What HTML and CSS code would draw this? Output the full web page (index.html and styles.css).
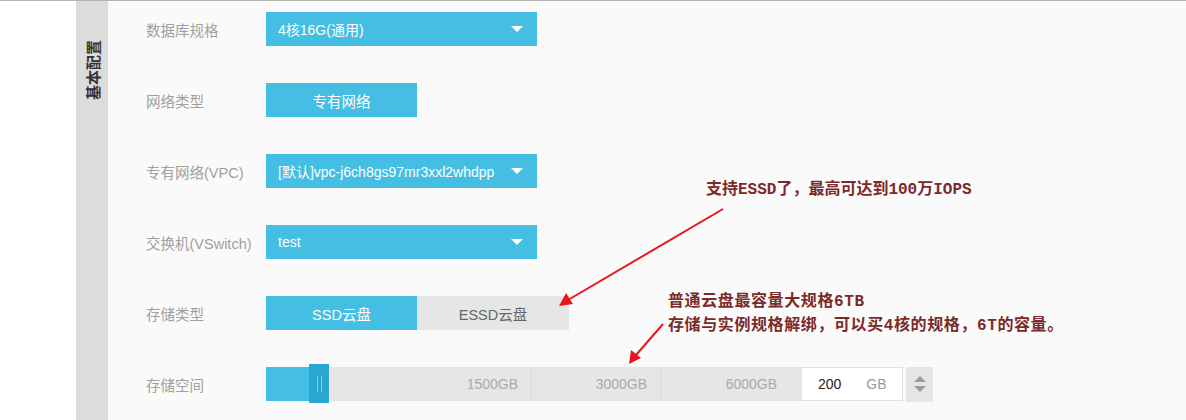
FILE: index.html
```html
<!DOCTYPE html>
<html lang="zh">
<head>
<meta charset="utf-8">
<title>基本配置</title>
<link rel="stylesheet" href="styles.css">
</head>
<body>
<div class="page">
  <div class="gutter"></div>
  <div class="side"><span class="side-title">基本配置</span></div>
  <div class="content">
    <div class="row">
      <div class="label">数据库规格</div>
      <div class="select"><span>4核16G(通用)</span><i class="caret"></i></div>
    </div>
    <div class="row">
      <div class="label">网络类型</div>
      <div class="btn active">专有网络</div>
    </div>
    <div class="row">
      <div class="label">专有网络(VPC)</div>
      <div class="select"><span>[默认]vpc-j6ch8gs97mr3xxl2whdpp</span><i class="caret"></i></div>
    </div>
    <div class="row">
      <div class="label">交换机(VSwitch)</div>
      <div class="select"><span>test</span><i class="caret"></i></div>
    </div>
    <div class="row">
      <div class="label">存储类型</div>
      <div class="seg">
        <div class="btn active">SSD云盘</div>
        <div class="btn">ESSD云盘</div>
      </div>
    </div>
    <div class="row">
      <div class="label">存储空间</div>
      <div class="slider">
        <div class="track">
          <div class="part p1">1500GB</div>
          <div class="part p2">3000GB</div>
          <div class="part p3">6000GB</div>
          <div class="fill"></div>
          <div class="handle"><i></i><i></i></div>
        </div>
        <div class="num"><span class="val">200</span><span class="unit">GB</span></div>
        <div class="spin"><i class="up"></i><i class="down"></i></div>
      </div>
    </div>
  </div>
</div>

<div class="note note1">支持ESSD了，最高可达到100万IOPS</div>
<div class="note note2">普通云盘最容量大规格6TB<br>存储与实例规格解绑，可以买4核的规格，6T的容量。</div>

<svg class="arrows" width="1186" height="420" viewBox="0 0 1186 420">
  <g stroke="#e8161b" stroke-width="2" fill="none">
    <line x1="723" y1="209" x2="568" y2="300"/>
    <line x1="663" y1="324" x2="636" y2="355"/>
  </g>
  <g fill="#e8161b">
    <polygon points="559,306 566,293 573,304"/>
    <polygon points="629,364 631,350 641,358"/>
  </g>
</svg>
</body>
</html>
```

FILE: styles.css
```css
html, body {
  margin: 0;
  padding: 0;
  height: 100%;
  background: #ffffff;
}
body {
  font-family: "Liberation Sans", "Noto Sans CJK SC", sans-serif;
  position: relative;
  overflow: hidden;
}
.page {
  display: flex;
  height: 420px;
  border-top: 1px solid #b3b3b3;
  box-sizing: border-box;
}
.gutter {
  width: 76px;
  background: #ffffff;
}
.side {
  width: 32px;
  background: #dcdcdc;
  display: flex;
  justify-content: center;
  padding-top: 37px;
  box-sizing: border-box;
}
.side-title {
  writing-mode: vertical-rl;
  text-orientation: sideways;
  transform: rotate(180deg);
  font-family: "Noto Sans CJK SC", sans-serif;
  font-weight: bold;
  font-size: 15px;
  line-height: 15px;
  color: #333333;
  height: 62px;
}
.content {
  flex: 1;
  background: #fafafa;
  padding: 11px 0 0 38px;
  display: flex;
  flex-direction: column;
  gap: 37px;
}
.row {
  display: flex;
  align-items: center;
  height: 34px;
}
.label {
  width: 120px;
  font-size: 14.5px;
  color: #a0a0a0;
}
.select {
  width: 271px;
  height: 34px;
  background: #44bee3;
  color: #ffffff;
  display: flex;
  align-items: center;
  justify-content: space-between;
  padding: 0 14px 0 12px;
  box-sizing: border-box;
  font-size: 14px;
}
.caret {
  width: 0;
  height: 0;
  border-left: 6px solid transparent;
  border-right: 6px solid transparent;
  border-top: 6px solid #ffffff;
}
.btn {
  width: 151px;
  height: 34px;
  display: flex;
  align-items: center;
  justify-content: center;
  font-size: 14.5px;
  background: #e6e6e6;
  color: #666666;
}
.btn.active {
  background: #44bee3;
  color: #ffffff;
}
.seg {
  display: flex;
}
.seg .btn + .btn {
  width: 152px;
}
.slider {
  display: flex;
  align-items: center;
}
.track {
  position: relative;
  display: flex;
  height: 34px;
  width: 535px;
  background: #e6e6e6;
}
.part {
  display: flex;
  align-items: center;
  justify-content: flex-end;
  font-size: 14px;
  color: #aaaaaa;
  box-sizing: border-box;
  height: 34px;
}
.p1 { width: 266px; padding-right: 13px; border-right: 1px solid #d9d9d9; }
.p2 { width: 129px; padding-right: 13px; border-right: 1px solid #d9d9d9; }
.p3 { width: 140px; padding-right: 24px; }
.fill {
  position: absolute;
  left: 0;
  top: 0;
  width: 44px;
  height: 34px;
  background: #44bee3;
}
.handle {
  position: absolute;
  left: 43px;
  top: -3px;
  width: 20px;
  height: 39px;
  background: #2ba6d0;
  display: flex;
  justify-content: center;
  align-items: center;
  gap: 3px;
}
.handle i {
  width: 1px;
  height: 16px;
  background: #7fd0ea;
}
.num {
  width: 102px;
  height: 34px;
  background: #ffffff;
  border: 1px solid #e3e3e3;
  box-sizing: border-box;
  display: flex;
  align-items: center;
  padding-left: 16px;
  gap: 25px;
  font-size: 14px;
}
.val { color: #222222; }
.unit { color: #999999; }
.spin {
  margin-left: 3px;
  width: 27px;
  height: 35px;
  background: #e6e6e6;
  display: flex;
  flex-direction: column;
  align-items: center;
  justify-content: center;
  gap: 4px;
}
.spin .up {
  width: 0; height: 0;
  border-left: 6px solid transparent;
  border-right: 6px solid transparent;
  border-bottom: 6px solid #9a9a9a;
}
.spin .down {
  width: 0; height: 0;
  border-left: 6px solid transparent;
  border-right: 6px solid transparent;
  border-top: 6px solid #9a9a9a;
}
.note {
  position: absolute;
  font-family: "Liberation Mono", "Noto Sans CJK SC", monospace;
  font-weight: bold;
  font-size: 16px;
  line-height: 24px;
  color: #7a2a2a;
  white-space: nowrap;
}
.note1 { left: 706px; top: 178px; }
.note2 { left: 668px; top: 290px; letter-spacing: 0.6px; }
.arrows {
  position: absolute;
  left: 0;
  top: 0;
  pointer-events: none;
}
```
